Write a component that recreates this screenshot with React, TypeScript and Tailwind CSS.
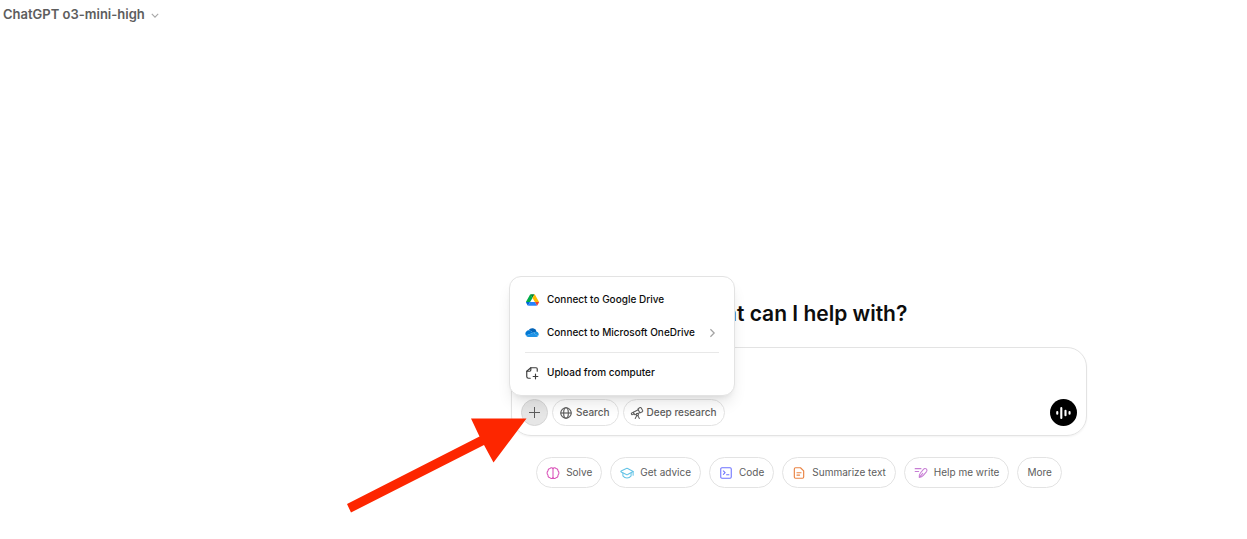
import { useState } from 'react';
import type { ReactNode } from 'react';

function GoogleDriveIcon() {
  return (
    <svg viewBox="0 0 87.3 78" className="h-3 w-[13px]" aria-hidden="true">
      <path d="m6.6 66.85 3.85 6.65c.8 1.4 1.95 2.5 3.3 3.3l13.75-23.8h-27.5c0 1.55.4 3.1 1.2 4.5z" fill="#0066da" />
      <path d="m43.65 25-13.75-23.8c-1.35.8-2.5 1.9-3.3 3.3l-25.4 44a9.06 9.06 0 0 0 -1.2 4.5h27.5z" fill="#00ac47" />
      <path d="m73.55 76.8c1.35-.8 2.5-1.9 3.3-3.3l1.6-2.75 7.65-13.25c.8-1.4 1.2-2.95 1.2-4.5h-27.502l5.852 11.5z" fill="#ea4335" />
      <path d="m43.65 25 13.75-23.8c-1.35-.8-2.9-1.2-4.5-1.2h-18.5c-1.6 0-3.15.45-4.5 1.2z" fill="#00832d" />
      <path d="m59.8 53h-32.3l-13.75 23.8c1.35.8 2.9 1.2 4.5 1.2h50.8c1.6 0 3.15-.45 4.5-1.2z" fill="#2684fc" />
      <path d="m73.4 26.5-12.7-22c-.8-1.4-1.95-2.5-3.3-3.3l-13.75 23.8 16.15 28h27.45c0-1.55-.4-3.1-1.2-4.5z" fill="#ffba00" />
    </svg>
  );
}

function OneDriveIcon() {
  return (
    <svg viewBox="0 0 28 18" className="h-[9px] w-3.5" aria-hidden="true">
      <path d="M10.5 5.6 17 9.4l3.8-1.6a6 6 0 0 1 2.6-.5A9 9 0 0 0 7 4.6h.2c1.2 0 2.3.4 3.3 1z" fill="#0364b8" />
      <path d="M10.5 5.6A6.5 6.5 0 0 0 1.9 14.8L11.5 11.3 17 9.4z" fill="#0078d4" />
      <path d="M23.4 7.3a6 6 0 0 0-2.6.5L17 9.4l9.2 6.4a5.3 5.3 0 0 0-2.8-8.5z" fill="#1490df" />
      <path d="M17 9.4 1.9 14.8A6.5 6.5 0 0 0 7.2 18h15.5a5.3 5.3 0 0 0 3.5-2.2z" fill="#1f93e6" />
    </svg>
  );
}

function UploadIcon() {
  return (
    <svg viewBox="0 0 24 24" className="size-3.5" fill="none" stroke="#3d3d3d" strokeWidth="2" strokeLinecap="round" strokeLinejoin="round" aria-hidden="true">
      <path d="M21 9V5a2 2 0 0 0-2-2h-9L3 9v9a3 3 0 0 0 3 3h3" />
      <path d="M10 3v4a2 2 0 0 1-2 2H3M18 14v8M14 18h8" />
    </svg>
  );
}

function GlobeIcon() {
  return (
    <svg viewBox="0 0 24 24" className="size-3.5" fill="none" stroke="currentColor" strokeWidth="2" aria-hidden="true">
      <circle cx="12" cy="12" r="9" />
      <ellipse cx="12" cy="12" rx="4" ry="9" />
      <path d="M3 12h18" />
    </svg>
  );
}

function TelescopeIcon() {
  return (
    <svg viewBox="0 0 24 24" className="size-3.5" fill="none" stroke="currentColor" strokeWidth="1.8" strokeLinecap="round" strokeLinejoin="round" aria-hidden="true">
      <path d="m14.500 4.200 2.800-1.500c.8-.4 1.500-.2 2 .6l2.400 4.500c.4.8.2 1.500-.6 2l-2.700 1.400c-.8.400-1.500.200-2-.6l-2.500-4.400c-.4-.8-.2-1.500.6-2z" />
      <path d="m14 6.500-7.300 3.700c-.8.500-1 1.200-.6 2l1 2c.4.800 1.200 1 2 .6l7.400-3.400" />
      <path d="m6 10.500-3 1.600c-.7.400-.9 1-.6 1.600l.3.600c.3.600 1 .8 1.600.5l3-1.400" />
      <circle cx="12.500" cy="14.500" r="2" />
      <path d="M11.500 16.500 9 21.500M13.500 16.500l2.500 5" />
    </svg>
  );
}

function VoiceIcon() {
  return (
    <svg viewBox="0 0 24 24" className="size-[18px]" fill="none" stroke="white" strokeWidth="2.8" strokeLinecap="round" aria-hidden="true">
      <path d="M3 10.700v2.200M8.400 5.500v13M14 9v6M19.400 10.700v2.200" />
    </svg>
  );
}

function BrainIcon() {
  return (
    <svg viewBox="0 0 24 24" className="size-3.5" fill="none" stroke="#d94fb8" strokeWidth="1.8" strokeLinecap="round" strokeLinejoin="round" aria-hidden="true">
      <path d="M12 4.5v15.500" />
      <path d="M12 4.5A3 3 0 0 0 6.800 4.300 3.600 3.600 0 0 0 3.500 8.500a4.500 4.500 0 0 0 0 7A3.600 3.600 0 0 0 7 20a3 3 0 0 0 5 .3" />
      <path d="M12 4.5a3 3 0 0 1 5.200-.2 3.600 3.600 0 0 1 3.300 4.200 4.500 4.500 0 0 1 0 7A3.600 3.600 0 0 1 17 20a3 3 0 0 1-5 .3" />
    </svg>
  );
}

function CapIcon() {
  return (
    <svg viewBox="0 0 24 24" className="size-3.5" fill="none" stroke="#63c3e6" strokeWidth="1.8" strokeLinecap="round" strokeLinejoin="round" aria-hidden="true">
      <path d="M10.8 4.4 2 8.5c-.8.4-.8 1.5 0 1.9l8.800 4.200c.8.400 1.600.400 2.400 0L22.500 9.500l-9.300-5.100c-.8-.4-1.600-.4-2.400 0z" />
      <path d="M5 12v5c2 2.500 4.500 3.500 7 3.500s5-1 7-3.500v-5M22.500 9.500V16" />
    </svg>
  );
}

function CodeIcon() {
  return (
    <svg viewBox="0 0 24 24" className="size-3.5" fill="none" stroke="#6c71ff" strokeWidth="1.8" strokeLinecap="round" strokeLinejoin="round" aria-hidden="true">
      <rect x="3" y="3" width="18" height="18" rx="2" />
      <path d="m7.500 8.500 3 3-3 3M13 15h4" />
    </svg>
  );
}

function DocumentIcon() {
  return (
    <svg viewBox="0 0 24 24" className="size-3.5" fill="none" stroke="#ea8444" strokeWidth="2" strokeLinecap="round" strokeLinejoin="round" aria-hidden="true">
      <path d="M14.500 3H6a2 2 0 0 0-2 2v14a2 2 0 0 0 2 2h12a2 2 0 0 0 2-2V8.500z" />
      <path d="M8.500 11.500h7M8.500 15.500h4.500" />
    </svg>
  );
}

function WriteIcon() {
  return (
    <svg viewBox="0 0 24 24" className="size-3.5" fill="none" stroke="#c77dd4" strokeWidth="1.8" strokeLinecap="round" strokeLinejoin="round" aria-hidden="true">
      <path d="M2 4.500h10M2 9.500h6" />
      <path d="M9 19.500c-.5-3 .5-5.500 2-7.500l5.500-6.500a3.200 3.200 0 0 1 5 4L16 16c-1.700 2-4 3.300-7 3.500zM9 19.500l6-7" />
    </svg>
  );
}

const suggestions: { label: string; icon?: ReactNode }[] = [
  { label: 'Solve', icon: <BrainIcon /> },
  { label: 'Get advice', icon: <CapIcon /> },
  { label: 'Code', icon: <CodeIcon /> },
  { label: 'Summarize text', icon: <DocumentIcon /> },
  { label: 'Help me write', icon: <WriteIcon /> },
  { label: 'More' },
];

function AttachMenu() {
  return (
    <div role="menu" className="absolute -left-[3px] bottom-[39px] z-10 w-[226px] rounded-xl border border-[#e3e3e3] bg-white px-[15px] py-1.5 text-[10px] font-medium text-[#0d0d0d] shadow-lg">
      <button role="menuitem" className="flex h-[33px] w-full items-center gap-2 whitespace-nowrap">
        <span className="flex w-3.5 justify-center"><GoogleDriveIcon /></span>
        Connect to Google Drive
      </button>
      <button role="menuitem" className="flex h-[33px] w-full items-center gap-2 whitespace-nowrap">
        <OneDriveIcon />
        Connect to Microsoft OneDrive
        <svg viewBox="0 0 8 12" className="mr-[3px] ml-auto h-2.5 w-[7px]" fill="none" stroke="#a3a3a3" strokeWidth="1.5" aria-hidden="true">
          <path d="m1.500 1.500 4.500 4.500-4.500 4.500" />
        </svg>
      </button>
      <hr className="my-[3px] border-[#e8e8e8]" />
      <button role="menuitem" className="flex h-[33px] w-full items-center gap-2 whitespace-nowrap">
        <UploadIcon />
        Upload from computer
      </button>
    </div>
  );
}

export default function App() {
  const [menuOpen, setMenuOpen] = useState(true);
  const [message, setMessage] = useState('');

  return (
    <div className="min-h-screen bg-white font-['Inter',sans-serif] text-[#0d0d0d]">
      <header className="flex h-[30px] items-center px-[3px]">
        <button className="flex items-center gap-1.5 text-[13px] font-semibold text-[#5d5d5d]">
          ChatGPT o3-mini-high
          <svg viewBox="0 0 10 6" className="h-[5px] w-2" fill="none" stroke="#a8a8a8" strokeWidth="1.4" aria-hidden="true">
            <path d="m1 1 4 4 4-4" />
          </svg>
        </button>
      </header>

      <main className="flex flex-col items-center pt-[269px] pl-[351px]">
        <h1 className="text-[21px] leading-[30px] font-semibold">What can I help with?</h1>

        <div className="relative mt-[18px] w-full max-w-[576px] rounded-[20px] border border-[#e3e3e3] px-[9px] pb-[9px] shadow-xs">
          <textarea
            aria-label="Message"
            value={message}
            onChange={(e) => setMessage(e.target.value)}
            className="block h-[51px] w-full resize-none bg-transparent px-2 pt-3 text-xs outline-none"
          />
          <div className="flex items-center gap-1 text-[10px] font-medium text-[#5d5d5d]">
            <button
              aria-label="Attach"
              onClick={() => setMenuOpen(!menuOpen)}
              className="flex size-[27px] items-center justify-center rounded-full border border-[#d6d6d6] bg-[#e6e6e6]"
            >
              <svg viewBox="0 0 11 11" className="size-[11px]" stroke="#5d5d5d" aria-hidden="true">
                <path d="M5.500 0v11M0 5.500h11" />
              </svg>
            </button>
            <button className="flex h-[27px] items-center gap-[3px] rounded-full border border-[#e3e3e3] pr-2 pl-1.5">
              <GlobeIcon />
              Search
            </button>
            <button className="flex h-[27px] items-center gap-[3px] rounded-full border border-[#e3e3e3] pr-2 pl-1.5">
              <TelescopeIcon />
              Deep research
            </button>
            <button aria-label="Voice mode" className="ml-auto flex size-[27px] items-center justify-center rounded-full bg-black">
              <VoiceIcon />
            </button>
          </div>

          {menuOpen && <AttachMenu />}

          {/* arrow pointing at the attach button */}
          <svg viewBox="0 0 181 95" className="pointer-events-none absolute top-[70px] -left-[166px] z-20 h-[95px] w-[181px]" aria-hidden="true">
            <path d="M1 86 133.500 18.500 125 .5H180.500L147.500 44.500 138 27 5 94.500z" fill="#fd2600" />
          </svg>
        </div>

        <div className="mt-[21px] flex flex-wrap justify-center gap-2">
          {suggestions.map((s) => (
            <button key={s.label} className="flex h-[31px] items-center gap-1.5 rounded-full border border-[#e3e3e3] px-[9px] text-[10px] text-[#5d5d5d]">
              {s.icon}
              {s.label}
            </button>
          ))}
        </div>
      </main>
    </div>
  );
}
